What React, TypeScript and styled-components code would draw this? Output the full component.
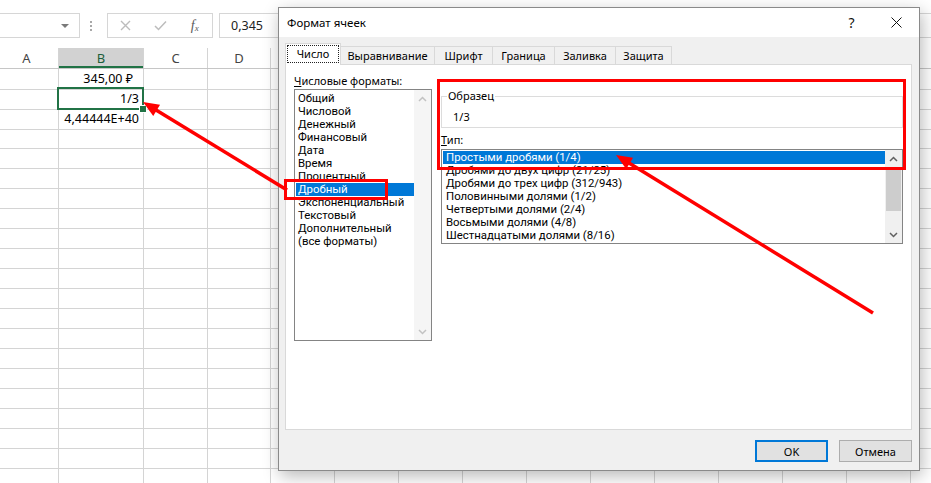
import React from "react";
import styled, { createGlobalStyle } from "styled-components";

const GlobalStyle = createGlobalStyle`
  html, body {
    margin: 0;
    padding: 0;
    background: #ffffff;
  }
  body {
    font-family: "Noto Sans", "DejaVu Sans", sans-serif;
    color: #000;
  }
  * {
    box-sizing: border-box;
  }
`;

const COLUMN_WIDTHS = [64, 85, 64, 63, 64, 64, 64, 64, 64, 64, 64, 64, 64, 64, 64];
// only A-D are visible, the rest of the header sits under the dialog
const COLUMN_LETTERS = ["A", "B", "C", "D"];
const ROW_COUNT = 21;
const GRID_TEMPLATE = COLUMN_WIDTHS.map((w) => `${w}px`).join(" ");

const cellValues: Record<string, { text: string; pad?: number }> = {
  "0-1": { text: "345,00 ₽", pad: 10 },
  "1-1": { text: "1/3" },
  "2-1": { text: "4,44444E+40" },
};

const numberFormats = [
  "Общий",
  "Числовой",
  "Денежный",
  "Финансовый",
  "Дата",
  "Время",
  "Процентный",
  "Дробный",
  "Экспоненциальный",
  "Текстовый",
  "Дополнительный",
  "(все форматы)",
];

const fractionTypes = [
  "Простыми дробями (1/4)",
  "Дробями до двух цифр (21/25)",
  "Дробями до трех цифр (312/943)",
  "Половинными долями (1/2)",
  "Четвертыми долями (2/4)",
  "Восьмыми долями (4/8)",
  "Шестнадцатыми долями (8/16)",
];

// widths measured from the screenshot, borders included
const tabs = [
  { label: "Число", width: 56 },
  { label: "Выравнивание", width: 94 },
  { label: "Шрифт", width: 58 },
  { label: "Граница", width: 62 },
  { label: "Заливка", width: 61 },
  { label: "Защита", width: 56 },
];

const App = () => {
  return (
    <Page>
      <GlobalStyle />

      <FormulaBar>
        <NameBox>
          <DropTriangle />
        </NameBox>
        <Grip>
          <GripDot />
          <GripDot />
          <GripDot />
        </Grip>
        <ButtonGroup>
          <IconSlot>
            <svg width="11" height="11" viewBox="0 0 11 11">
              <path d="M1 1 L10 10 M10 1 L1 10" stroke="#bcbcbc" strokeWidth="1.4" fill="none" />
            </svg>
          </IconSlot>
          <IconSlot>
            <svg width="13" height="11" viewBox="0 0 13 11">
              <path d="M1 6 L4.5 9.5 L12 1.5" stroke="#bcbcbc" strokeWidth="1.5" fill="none" />
            </svg>
          </IconSlot>
          <IconSlot>
            <FxText>
              f<sub>x</sub>
            </FxText>
          </IconSlot>
        </ButtonGroup>
        <FormulaInput>0,345</FormulaInput>
      </FormulaBar>

      <Sheet>
        <HeaderRow>
          {COLUMN_WIDTHS.map((_, i) => (
            <HeaderCell key={i} $active={i === 1}>
              {COLUMN_LETTERS[i]}
            </HeaderCell>
          ))}
        </HeaderRow>
        {Array.from({ length: ROW_COUNT }).map((_, r) => (
          <SheetRow key={r}>
            {COLUMN_WIDTHS.map((__, c) => {
              const value = cellValues[`${r}-${c}`];
              return (
                <Cell key={c} $selected={r === 1 && c === 1} $pad={value?.pad ?? 4}>
                  {value?.text}
                </Cell>
              );
            })}
          </SheetRow>
        ))}
      </Sheet>

      <Dialog>
        <TitleBar>
          <Title>Формат ячеек</Title>
          <TitleButton>
            <HelpMark>?</HelpMark>
          </TitleButton>
          <TitleButton>
            <svg width="11" height="11" viewBox="0 0 11 11">
              <path d="M0.5 0.5 L10.5 10.5 M10.5 0.5 L0.5 10.5" stroke="#111" strokeWidth="1" fill="none" />
            </svg>
          </TitleButton>
        </TitleBar>

        <DialogBody>
          <TabStrip>
            {tabs.map((tab, i) => (
              <Tab key={tab.label} $active={i === 0} $width={tab.width}>
                {i === 0 ? <FocusLabel>{tab.label}</FocusLabel> : tab.label}
              </Tab>
            ))}
          </TabStrip>

          <TabPanel>
            <LeftColumn>
              <FieldLabel>
                <u>Ч</u>исловые форматы:
              </FieldLabel>
              <ListBox $height={252}>
                <ListItems $padTop={2}>
                  {numberFormats.map((item) => (
                    <ListItem key={item} $selected={item === "Дробный"} $indent={2}>
                      {item}
                    </ListItem>
                  ))}
                </ListItems>
                <ScrollBar $disabled>
                  <ScrollArrow>
                    <Chevron up color="#c2c2c2" />
                  </ScrollArrow>
                  <ScrollTrack />
                  <ScrollArrow>
                    <Chevron color="#c2c2c2" />
                  </ScrollArrow>
                </ScrollBar>
              </ListBox>
            </LeftColumn>

            <RightColumn>
              <SampleGroup>
                <SampleLegend>Образец</SampleLegend>
                <SampleValue>1/3</SampleValue>
              </SampleGroup>
              <TypeLabel>
                <u>Т</u>ип:
              </TypeLabel>
              <ListBox $height={95}>
                <ListItems $padTop={1}>
                  {fractionTypes.map((item, i) => (
                    <ListItem key={item} $selected={i === 0} $indent={3}>
                      {item}
                    </ListItem>
                  ))}
                </ListItems>
                <ScrollBar>
                  <ScrollArrow>
                    <Chevron up color="#606060" />
                  </ScrollArrow>
                  <ScrollTrack>
                    <ScrollThumb />
                  </ScrollTrack>
                  <ScrollArrow>
                    <Chevron color="#606060" />
                  </ScrollArrow>
                </ScrollBar>
              </ListBox>
            </RightColumn>
          </TabPanel>

          <DialogFooter>
            <DialogButton $primary>OK</DialogButton>
            <DialogButton>Отмена</DialogButton>
          </DialogFooter>
        </DialogBody>
      </Dialog>

      <Annotations width="931" height="483" viewBox="0 0 931 483">
        <rect x="285.5" y="180.5" width="101" height="18" fill="none" stroke="#ff0000" strokeWidth="3" />
        <rect x="438.5" y="80.5" width="466" height="88" fill="none" stroke="#ff0000" strokeWidth="3" />
        <Arrow x1={287} y1={190} x2={143} y2={102} />
        <Arrow x1={873} y1={313} x2={616} y2={155} />
      </Annotations>
    </Page>
  );
};

export default App;

interface ArrowProps {
  x1: number;
  y1: number;
  x2: number;
  y2: number;
}

const Arrow = ({ x1, y1, x2, y2 }: ArrowProps) => {
  const dx = x1 - x2;
  const dy = y1 - y2;
  const len = Math.sqrt(dx * dx + dy * dy);
  const ux = dx / len;
  const uy = dy / len;
  const headLen = 16;
  const halfW = 6.5;
  const bx = x2 + ux * headLen;
  const by = y2 + uy * headLen;
  const p1 = `${bx - uy * halfW},${by + ux * halfW}`;
  const p2 = `${bx + uy * halfW},${by - ux * halfW}`;
  return (
    <g>
      <line x1={x1} y1={y1} x2={x2 + ux * 10} y2={y2 + uy * 10} stroke="#ff0000" strokeWidth="3.5" />
      <polygon points={`${x2},${y2} ${p1} ${p2}`} fill="#ff0000" />
    </g>
  );
};

const Chevron = ({ up = false, color }: { up?: boolean; color: string }) => (
  <svg width="9" height="6" viewBox="0 0 9 6">
    <path
      d={up ? "M1 5 L4.5 1.5 L8 5" : "M1 1 L4.5 4.5 L8 1"}
      stroke={color}
      strokeWidth="1.5"
      fill="none"
    />
  </svg>
);

const Page = styled.div`
  position: relative;
  width: 931px;
  height: 483px;
  overflow: hidden;
  background: #ffffff;
`;

const FormulaBar = styled.div`
  display: flex;
  align-items: flex-start;
  height: 48px;
  padding-top: 13px;
  background: #ffffff;
`;

const NameBox = styled.div`
  width: 81px;
  height: 25px;
  margin-left: -1px;
  border: 1px solid #d6d6d6;
  background: #ffffff;
  display: flex;
  align-items: center;
  justify-content: flex-end;
  padding-right: 10px;
`;

const DropTriangle = styled.span`
  width: 0;
  height: 0;
  border-left: 4px solid transparent;
  border-right: 4px solid transparent;
  border-top: 4px solid #7a7a7a;
`;

const Grip = styled.div`
  display: flex;
  flex-direction: column;
  gap: 2px;
  margin: 8px 15px 0 10px;
`;

const GripDot = styled.span`
  width: 2px;
  height: 2px;
  background: #a8a8a8;
`;

const ButtonGroup = styled.div`
  display: flex;
  width: 106px;
  height: 25px;
  border: 1px solid #d6d6d6;
  background: #ffffff;
`;

const IconSlot = styled.div`
  flex: 1;
  display: flex;
  align-items: center;
  justify-content: center;
`;

const FxText = styled.span`
  font-family: "Liberation Serif", "DejaVu Serif", serif;
  font-style: italic;
  font-size: 14px;
  color: #5a5a5a;
  line-height: 1;

  sub {
    font-size: 9px;
    vertical-align: -1px;
  }
`;

const FormulaInput = styled.div`
  flex: 1;
  height: 25px;
  margin-left: 6px;
  margin-right: -1px;
  border: 1px solid #d6d6d6;
  background: #ffffff;
  padding-left: 11px;
  font-size: 12.5px;
  line-height: 23px;
  color: #222;
`;

const Sheet = styled.div`
  margin-left: -5px;
`;

const HeaderRow = styled.div`
  display: grid;
  grid-template-columns: ${GRID_TEMPLATE};
  height: 21px;
  border-bottom: 1px solid #c6c6c6;
`;

const HeaderCell = styled.div<{ $active?: boolean }>`
  display: flex;
  align-items: center;
  justify-content: center;
  border-right: 1px solid #d4d4d4;
  font-size: 13px;
  color: ${(p) => (p.$active ? "#1d5f3b" : "#444444")};
  background: ${(p) => (p.$active ? "#d2d2d2" : "#ffffff")};
  box-shadow: ${(p) => (p.$active ? "inset 0 -2px 0 #217346" : "none")};
`;

const SheetRow = styled.div`
  display: grid;
  grid-template-columns: ${GRID_TEMPLATE};
  height: 20px;
`;

const Cell = styled.div<{ $selected?: boolean; $pad: number }>`
  position: relative;
  border-right: 1px solid #d4d4d4;
  border-bottom: 1px solid #d4d4d4;
  text-align: right;
  padding-right: ${(p) => p.$pad}px;
  font-size: 12.5px;
  line-height: 20px;
  color: #000;
  white-space: nowrap;
  z-index: ${(p) => (p.$selected ? 1 : 0)};

  ${(p) =>
    p.$selected &&
    `
    &::after {
      content: "";
      position: absolute;
      left: -2px;
      top: -2px;
      right: -1px;
      bottom: -1px;
      border: 2px solid #217346;
    }
    &::before {
      content: "";
      position: absolute;
      right: -4px;
      bottom: -4px;
      width: 6px;
      height: 6px;
      background: #217346;
      border: 1px solid #ffffff;
      z-index: 2;
    }
  `}
`;

const Dialog = styled.div`
  position: absolute;
  left: 278px;
  top: 7px;
  width: 642px;
  height: 464px;
  border: 1px solid #8a8a8a;
  background: #f0f0f0;
  display: flex;
  flex-direction: column;
  box-shadow: 2px 5px 16px rgba(0, 0, 0, 0.28);
  font-size: 11px;
  z-index: 5;
`;

const TitleBar = styled.div`
  display: flex;
  align-items: center;
  height: 29px;
  background: #ffffff;
  padding-left: 8px;
  padding-right: 0;
`;

const Title = styled.div`
  flex: 1;
  font-size: 11.5px;
  color: #000;
`;

const TitleButton = styled.div`
  width: 45px;
  height: 29px;
  display: flex;
  align-items: center;
  justify-content: center;
`;

const HelpMark = styled.span`
  font-size: 14px;
  color: #111;
  line-height: 1;
`;

const DialogBody = styled.div`
  flex: 1;
  display: flex;
  flex-direction: column;
  padding: 7px 7px 7px 6px;
`;

const TabStrip = styled.div`
  display: flex;
  align-items: flex-end;
  height: 21px;
  margin-bottom: -1px;
  position: relative;
  z-index: 1;
`;

const Tab = styled.div<{ $active?: boolean; $width: number }>`
  width: ${(p) => p.$width}px;
  height: ${(p) => (p.$active ? 22 : 19)}px;
  border-top: 1px solid #d9d9d9;
  border-right: 1px solid #d9d9d9;
  border-bottom: ${(p) => (p.$active ? "none" : "1px solid #d9d9d9")};
  background: ${(p) => (p.$active ? "#ffffff" : "#f0f0f0")};
  display: flex;
  align-items: center;
  justify-content: center;
  padding-bottom: ${(p) => (p.$active ? 1 : 0)}px;
  line-height: 14px;
  color: #000;
  white-space: nowrap;

  &:first-child {
    border-left: 1px solid #d9d9d9;
  }
`;

const FocusLabel = styled.span`
  outline: 1px dotted #222;
  outline-offset: 1px;
  padding: 0 8px;
`;

const TabPanel = styled.div`
  height: 366px;
  background: #ffffff;
  border: 1px solid #d9d9d9;
  display: grid;
  grid-template-columns: 138px 462px;
  column-gap: 9px;
  align-items: start;
  padding: 9px 0 0 8px;
`;

const LeftColumn = styled.div`
  display: flex;
  flex-direction: column;
`;

const RightColumn = styled.div`
  display: flex;
  flex-direction: column;
  padding-top: 15px;
`;

const FieldLabel = styled.div`
  line-height: 14px;
  margin-bottom: 1px;
  white-space: nowrap;

  u {
    text-decoration-thickness: 1px;
  }
`;

const TypeLabel = styled(FieldLabel)`
  margin-top: 5px;
  margin-bottom: 2px;
`;

const ListBox = styled.div<{ $height: number }>`
  display: flex;
  height: ${(p) => p.$height}px;
  border: 1px solid #848484;
  background: #ffffff;
`;

const ListItems = styled.div<{ $padTop: number }>`
  flex: 1;
  min-width: 0;
  padding-top: ${(p) => p.$padTop}px;
`;

const ListItem = styled.div<{ $selected?: boolean; $indent: number }>`
  height: 13px;
  line-height: 13px;
  margin-left: 1px;
  padding-left: ${(p) => p.$indent}px;
  font-family: Roboto, "Noto Sans", sans-serif;
  font-size: 11.4px;
  white-space: nowrap;
  overflow: hidden;
  color: ${(p) => (p.$selected ? "#ffffff" : "#000000")};
  background: ${(p) => (p.$selected ? "#0078d7" : "transparent")};
`;

const ScrollBar = styled.div<{ $disabled?: boolean }>`
  width: 17px;
  display: flex;
  flex-direction: column;
  background: ${(p) => (p.$disabled ? "#f5f5f5" : "#f0f0f0")};
`;

const ScrollArrow = styled.div`
  height: 17px;
  display: flex;
  align-items: center;
  justify-content: center;
`;

const ScrollTrack = styled.div`
  flex: 1;
  padding: 1px 1px 0 1px;
`;

const ScrollThumb = styled.div`
  height: 43px;
  background: #cdcdcd;
`;

const SampleGroup = styled.fieldset`
  margin: 0;
  min-width: 0;
  padding: 7px 0 3px 5px;
  border: 1px solid #dcdcdc;
`;

const SampleLegend = styled.legend`
  padding: 0 1px;
  line-height: 14px;
  font-size: 11px;
`;

const SampleValue = styled.div`
  line-height: 14px;
  padding-left: 6px;
`;

const DialogFooter = styled.div`
  display: flex;
  justify-content: flex-end;
  gap: 11px;
  margin-top: 10px;
`;

const DialogButton = styled.div<{ $primary?: boolean }>`
  width: 73px;
  height: 22px;
  display: flex;
  align-items: center;
  justify-content: center;
  background: #e1e1e1;
  border: ${(p) => (p.$primary ? "2px solid #0078d7" : "1px solid #adadad")};
  color: #000;
`;

const Annotations = styled.svg`
  position: absolute;
  left: 0;
  top: 0;
  pointer-events: none;
  z-index: 10;
`;
